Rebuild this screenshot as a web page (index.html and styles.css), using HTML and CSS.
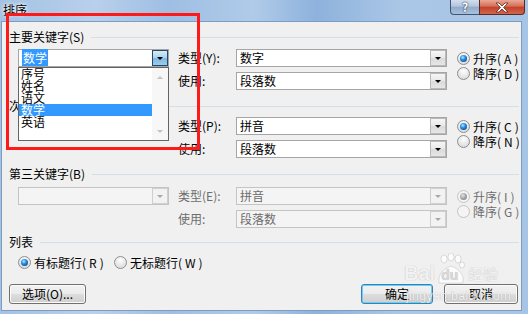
FILE: index.html
```html
<!DOCTYPE html>
<html lang="zh-CN">
<head>
    <meta charset="UTF-8">
    <title>排序</title>
    <link rel="stylesheet" href="styles.css">
</head>
<body>
    <div class="window">
        <div class="titlebar">
            <span class="title">排序</span>
            <div class="caption">
                <span class="cap-help">?</span>
                <span class="cap-close">
                    <svg width="14" height="11" viewBox="0 0 14 11"><path d="M1 1h3l3 3 3-3h3l-4.5 4.5L13 10h-3L7 7l-3 3H1l4.5-4.5z" fill="#fff" stroke="#5b2a22" stroke-width="0.8"/></svg>
                </span>
            </div>
        </div>

        <div class="client">
            <div class="heading">主要关键字(<u>S</u>)</div>
            <div class="keygroup g-first">
                <div class="combo key active"><span class="sel">数学</span><i class="arrow"></i></div>
                <span class="lbl">类型(<u>Y</u>):</span>
                <div class="combo wide">数字<i class="arrow"></i></div>
                <div class="radios">
                    <label class="radio on"><i></i>升序(<u>A</u>)</label>
                    <label class="radio"><i></i>降序(<u>D</u>)</label>
                </div>
                <span class="lbl row2">使用:</span>
                <div class="combo wide row2">段落数<i class="arrow"></i></div>
            </div>

            <div class="heading h-second">次要关键字(<u>T</u>)</div>
            <div class="keygroup g-second">
                <div class="combo key">语文<i class="arrow"></i></div>
                <span class="lbl">类型(<u>P</u>):</span>
                <div class="combo wide">拼音<i class="arrow"></i></div>
                <div class="radios">
                    <label class="radio on"><i></i>升序(<u>C</u>)</label>
                    <label class="radio"><i></i>降序(<u>N</u>)</label>
                </div>
                <span class="lbl row2">使用:</span>
                <div class="combo wide row2">段落数<i class="arrow"></i></div>
            </div>

            <div class="heading h-third">第三关键字(<u>B</u>)</div>
            <div class="keygroup g-third disabled">
                <div class="combo key"><i class="arrow"></i></div>
                <span class="lbl">类型(<u>E</u>):</span>
                <div class="combo wide">拼音<i class="arrow"></i></div>
                <div class="radios">
                    <label class="radio on"><i></i>升序(<u>I</u>)</label>
                    <label class="radio"><i></i>降序(<u>G</u>)</label>
                </div>
                <span class="lbl row2">使用:</span>
                <div class="combo wide row2">段落数<i class="arrow"></i></div>
            </div>

            <div class="heading h-list">列表</div>
            <div class="listopts">
                <label class="radio on"><i></i>有标题行(<u>R</u>)</label>
                <label class="radio"><i></i>无标题行(<u>W</u>)</label>
            </div>

            <div class="actions">
                <button class="btn">选项(<u>O</u>)...</button>
                <span class="spacer"></span>
                <button class="btn default">确定</button>
                <button class="btn">取消</button>
            </div>

            <div class="droplist">
                <div class="items">
                    <div class="item">序号</div>
                    <div class="item">姓名</div>
                    <div class="item">语文</div>
                    <div class="item hl">数学</div>
                    <div class="item">英语</div>
                </div>
                <div class="scroll">
                    <i class="up"></i>
                    <i class="down"></i>
                </div>
            </div>
        </div>

        <div class="mark-box"></div>

        <div class="watermark">
            <div class="wm-top">
                <span class="wm-bai">Bai</span>
                <span class="wm-paw">
                    <svg width="30" height="32" viewBox="0 0 30 32">
                        <ellipse cx="8" cy="6" rx="3" ry="4"/>
                        <ellipse cx="15" cy="4" rx="3" ry="4"/>
                        <ellipse cx="22" cy="6" rx="3" ry="4"/>
                        <ellipse cx="26" cy="12" rx="2.5" ry="3"/>
                        <path d="M3 30 Q1 18 15 13 Q29 18 27 30 Z"/>
                    </svg>
                    <span class="wm-du">du</span>
                </span>
                <span class="wm-cn">经验</span>
            </div>
            <div class="wm-url">jingyan.baidu.com</div>
        </div>
    </div>
</body>
</html>
```

FILE: styles.css
```css
body {
    margin: 0;
    font-family: "Noto Sans CJK SC", "Liberation Sans", sans-serif;
    font-size: 12px;
    color: #000;
}
u {
    text-decoration: none;
}
.window {
    position: relative;
    width: 528px;
    height: 314px;
    overflow: hidden;
    display: flex;
    flex-direction: column;
    background: linear-gradient(90deg, #a3c2e4 0%, #b8d0eb 18%, #9ebee3 32%, #b0cbe9 48%, #8db2dc 60%, #abc7e7 76%, #a6c4e6 100%);
}
.titlebar {
    height: 22px;
    display: flex;
    justify-content: space-between;
    align-items: flex-start;
}
.title {
    padding: 2px 0 0 3px;
    line-height: 16px;
    text-shadow: 0 0 5px #fff, 0 0 3px #fff;
}
.caption {
    display: flex;
    margin-right: 3px;
}
.cap-help,
.cap-close {
    height: 15px;
    display: flex;
    justify-content: center;
    align-items: center;
    box-sizing: border-box;
    border: 1px solid #3f5570;
    border-top: none;
}
.cap-help {
    width: 29px;
    border-radius: 0 0 0 4px;
    border-right: none;
    background: linear-gradient(#d2deed, #b4c6dd 45%, #92aacb 50%, #a9c0dd);
    color: #fff;
    font-weight: bold;
    font-size: 12px;
    line-height: 14px;
    text-shadow: 0 0 2px #2d3e55, 0 0 1px #2d3e55;
}
.cap-close {
    width: 46px;
    border-radius: 0 0 4px 0;
    border-color: #5a2b24;
    background: linear-gradient(#e9a896, #d46f57 45%, #c2402c 50%, #d2664a);
}
.client {
    position: relative;
    flex: 1;
    margin: 0 7px 4px 2px;
    padding-top: 8px;
    background: #f0f0f0;
    box-shadow: 0 0 0 1px #7f9bbf;
    display: flex;
    flex-direction: column;
}
.heading {
    display: flex;
    align-items: center;
    height: 14px;
    line-height: 14px;
    padding: 0 2px 0 7px;
    white-space: nowrap;
}
.heading::after {
    content: "";
    flex: 1;
    margin-left: 7px;
    border-top: 1px solid #d5dfe5;
}
.h-second { margin-top: 9px; }
.h-third { margin-top: 9px; }
.h-list { margin-top: 7px; }

.keygroup {
    display: grid;
    grid-template-columns: 160px 58px 211px auto;
    grid-template-rows: 18px 18px;
    row-gap: 5px;
    padding-left: 16px;
}
.g-first { margin-top: 5px; }
.g-second { margin-top: 4px; }
.g-third { margin-top: 6px; }
.lbl {
    line-height: 18px;
    white-space: nowrap;
}
.lbl.row2 {
    grid-column: 2;
    grid-row: 2;
}
.combo.row2 {
    grid-column: 3;
    grid-row: 2;
}
.radios {
    grid-column: 4;
    grid-row: 1 / span 2;
    padding: 2px 0 0 10px;
}
.combo {
    position: relative;
    height: 18px;
    box-sizing: border-box;
    border: 1px solid #a5a5a5;
    background: #fff;
    line-height: 16px;
    padding-left: 3px;
    white-space: nowrap;
}
.combo.key { width: 151px; }
.combo.wide { width: 211px; }
.combo .sel {
    background: #3399ff;
    color: #fff;
    padding: 0 1px;
}
.arrow {
    position: absolute;
    top: 0;
    right: 0;
    bottom: 0;
    width: 16px;
    box-sizing: border-box;
    border: 1px solid #b9b9b9;
    background: linear-gradient(#f6f6f6, #e8e8e8 50%, #dadada 51%, #e6e6e6);
}
.arrow::after {
    content: "";
    position: absolute;
    left: 4px;
    top: 6px;
    border-left: 3px solid transparent;
    border-right: 3px solid transparent;
    border-top: 3px solid #000;
}
.combo.active .arrow {
    border-color: #26486d;
    background: linear-gradient(#d6ecf8, #a9d3ef 50%, #7fb7e0 51%, #9ccbeb);
}
.disabled .lbl,
.disabled .radio {
    color: #6d6d6d;
}
.disabled .combo {
    background: #f4f4f4;
    border-color: #c4c4c4;
    color: #6d6d6d;
}
.disabled .arrow {
    border-color: #cfcfcf;
    background: #f2f2f2;
}
.disabled .arrow::after {
    border-top-color: #a8a8a8;
}

.radio {
    display: flex;
    align-items: center;
    gap: 3px;
    height: 15px;
    white-space: nowrap;
}
.radio i {
    position: relative;
    width: 13px;
    height: 13px;
    box-sizing: border-box;
    border-radius: 50%;
    border: 1px solid #8e8f8f;
    background: radial-gradient(circle at 50% 30%, #fefefe, #dcdcdc 80%);
}
.radio.on i::after {
    content: "";
    position: absolute;
    inset: 2px;
    border-radius: 50%;
    background: radial-gradient(circle at 40% 35%, #b6ecff 0, #2f95ea 35%, #0b4a9a 80%);
}
.disabled .radio i {
    border-color: #c4c4c4;
    background: #f4f4f4;
}
.disabled .radio.on i::after {
    background: radial-gradient(circle at 40% 35%, #e4e4e4 0, #a9a9a9 45%, #868686 85%);
}

.listopts {
    display: flex;
    height: 14px;
    margin-top: 6px;
    padding-left: 16px;
}
.listopts .radio:first-child {
    width: 96px;
}

.actions {
    display: flex;
    gap: 11px;
    margin-top: 15px;
    padding: 0 3px 0 7px;
}
.spacer {
    flex: 1;
}
.btn {
    height: 20px;
    width: 74px;
    padding: 0;
    font: inherit;
    color: #000;
    line-height: 18px;
    border: 1px solid #707070;
    border-radius: 3px;
    background: linear-gradient(#f2f2f2, #ebebeb 50%, #dddddd 51%, #cfcfcf);
    box-shadow: inset 0 0 0 1px #fbfbfb;
}
.btn:first-child {
    width: 77px;
}
.btn.default {
    width: 72px;
    border-color: #3c7fb1;
    box-shadow: inset 0 0 0 1px #62d1fb;
}

.droplist {
    position: absolute;
    left: 16px;
    top: 45px;
    width: 151px;
    height: 74px;
    box-sizing: border-box;
    border: 1px solid #646464;
    background: #fff;
    display: flex;
}
.items {
    flex: 1;
}
.item {
    height: 12px;
    line-height: 12px;
    padding-left: 2px;
    white-space: nowrap;
}
.item.hl {
    background: #3399ff;
    color: #fff;
}
.scroll {
    position: relative;
    width: 16px;
    background: #f7f7f7;
}
.scroll i {
    position: absolute;
    left: 5px;
    border-left: 3px solid transparent;
    border-right: 3px solid transparent;
}
.scroll .up {
    top: 8px;
    border-bottom: 3px solid #c2c2c2;
}
.scroll .down {
    bottom: 7px;
    border-top: 3px solid #c2c2c2;
}

.mark-box {
    position: absolute;
    left: 6px;
    top: 13px;
    width: 194px;
    height: 137px;
    box-sizing: border-box;
    border: 3px solid #ff1a1a;
    pointer-events: none;
}

.watermark {
    position: absolute;
    left: 404px;
    top: 253px;
    pointer-events: none;
    color: rgba(255, 255, 255, 0.85);
    text-shadow: 0 0 1px rgba(0, 0, 0, 0.3);
    font-family: "Liberation Sans", sans-serif;
}
.wm-top {
    display: flex;
    align-items: flex-end;
    height: 32px;
}
.wm-bai {
    font-size: 20px;
    font-weight: bold;
    line-height: 20px;
    margin-bottom: 2px;
}
.wm-paw {
    position: relative;
    width: 30px;
    height: 32px;
    margin-left: 1px;
}
.wm-paw svg {
    fill: rgba(255, 255, 255, 0.8);
    stroke: rgba(0, 0, 0, 0.12);
}
.wm-du {
    position: absolute;
    left: 5px;
    top: 14px;
    font-size: 14px;
    font-weight: bold;
    color: rgba(220, 220, 220, 0.9);
}
.wm-cn {
    font-family: "Noto Sans CJK SC", sans-serif;
    font-size: 15px;
    line-height: 18px;
    margin: 0 0 2px 2px;
}
.wm-url {
    font-size: 13px;
    line-height: 14px;
    margin: 4px 0 0 2px;
}
```
